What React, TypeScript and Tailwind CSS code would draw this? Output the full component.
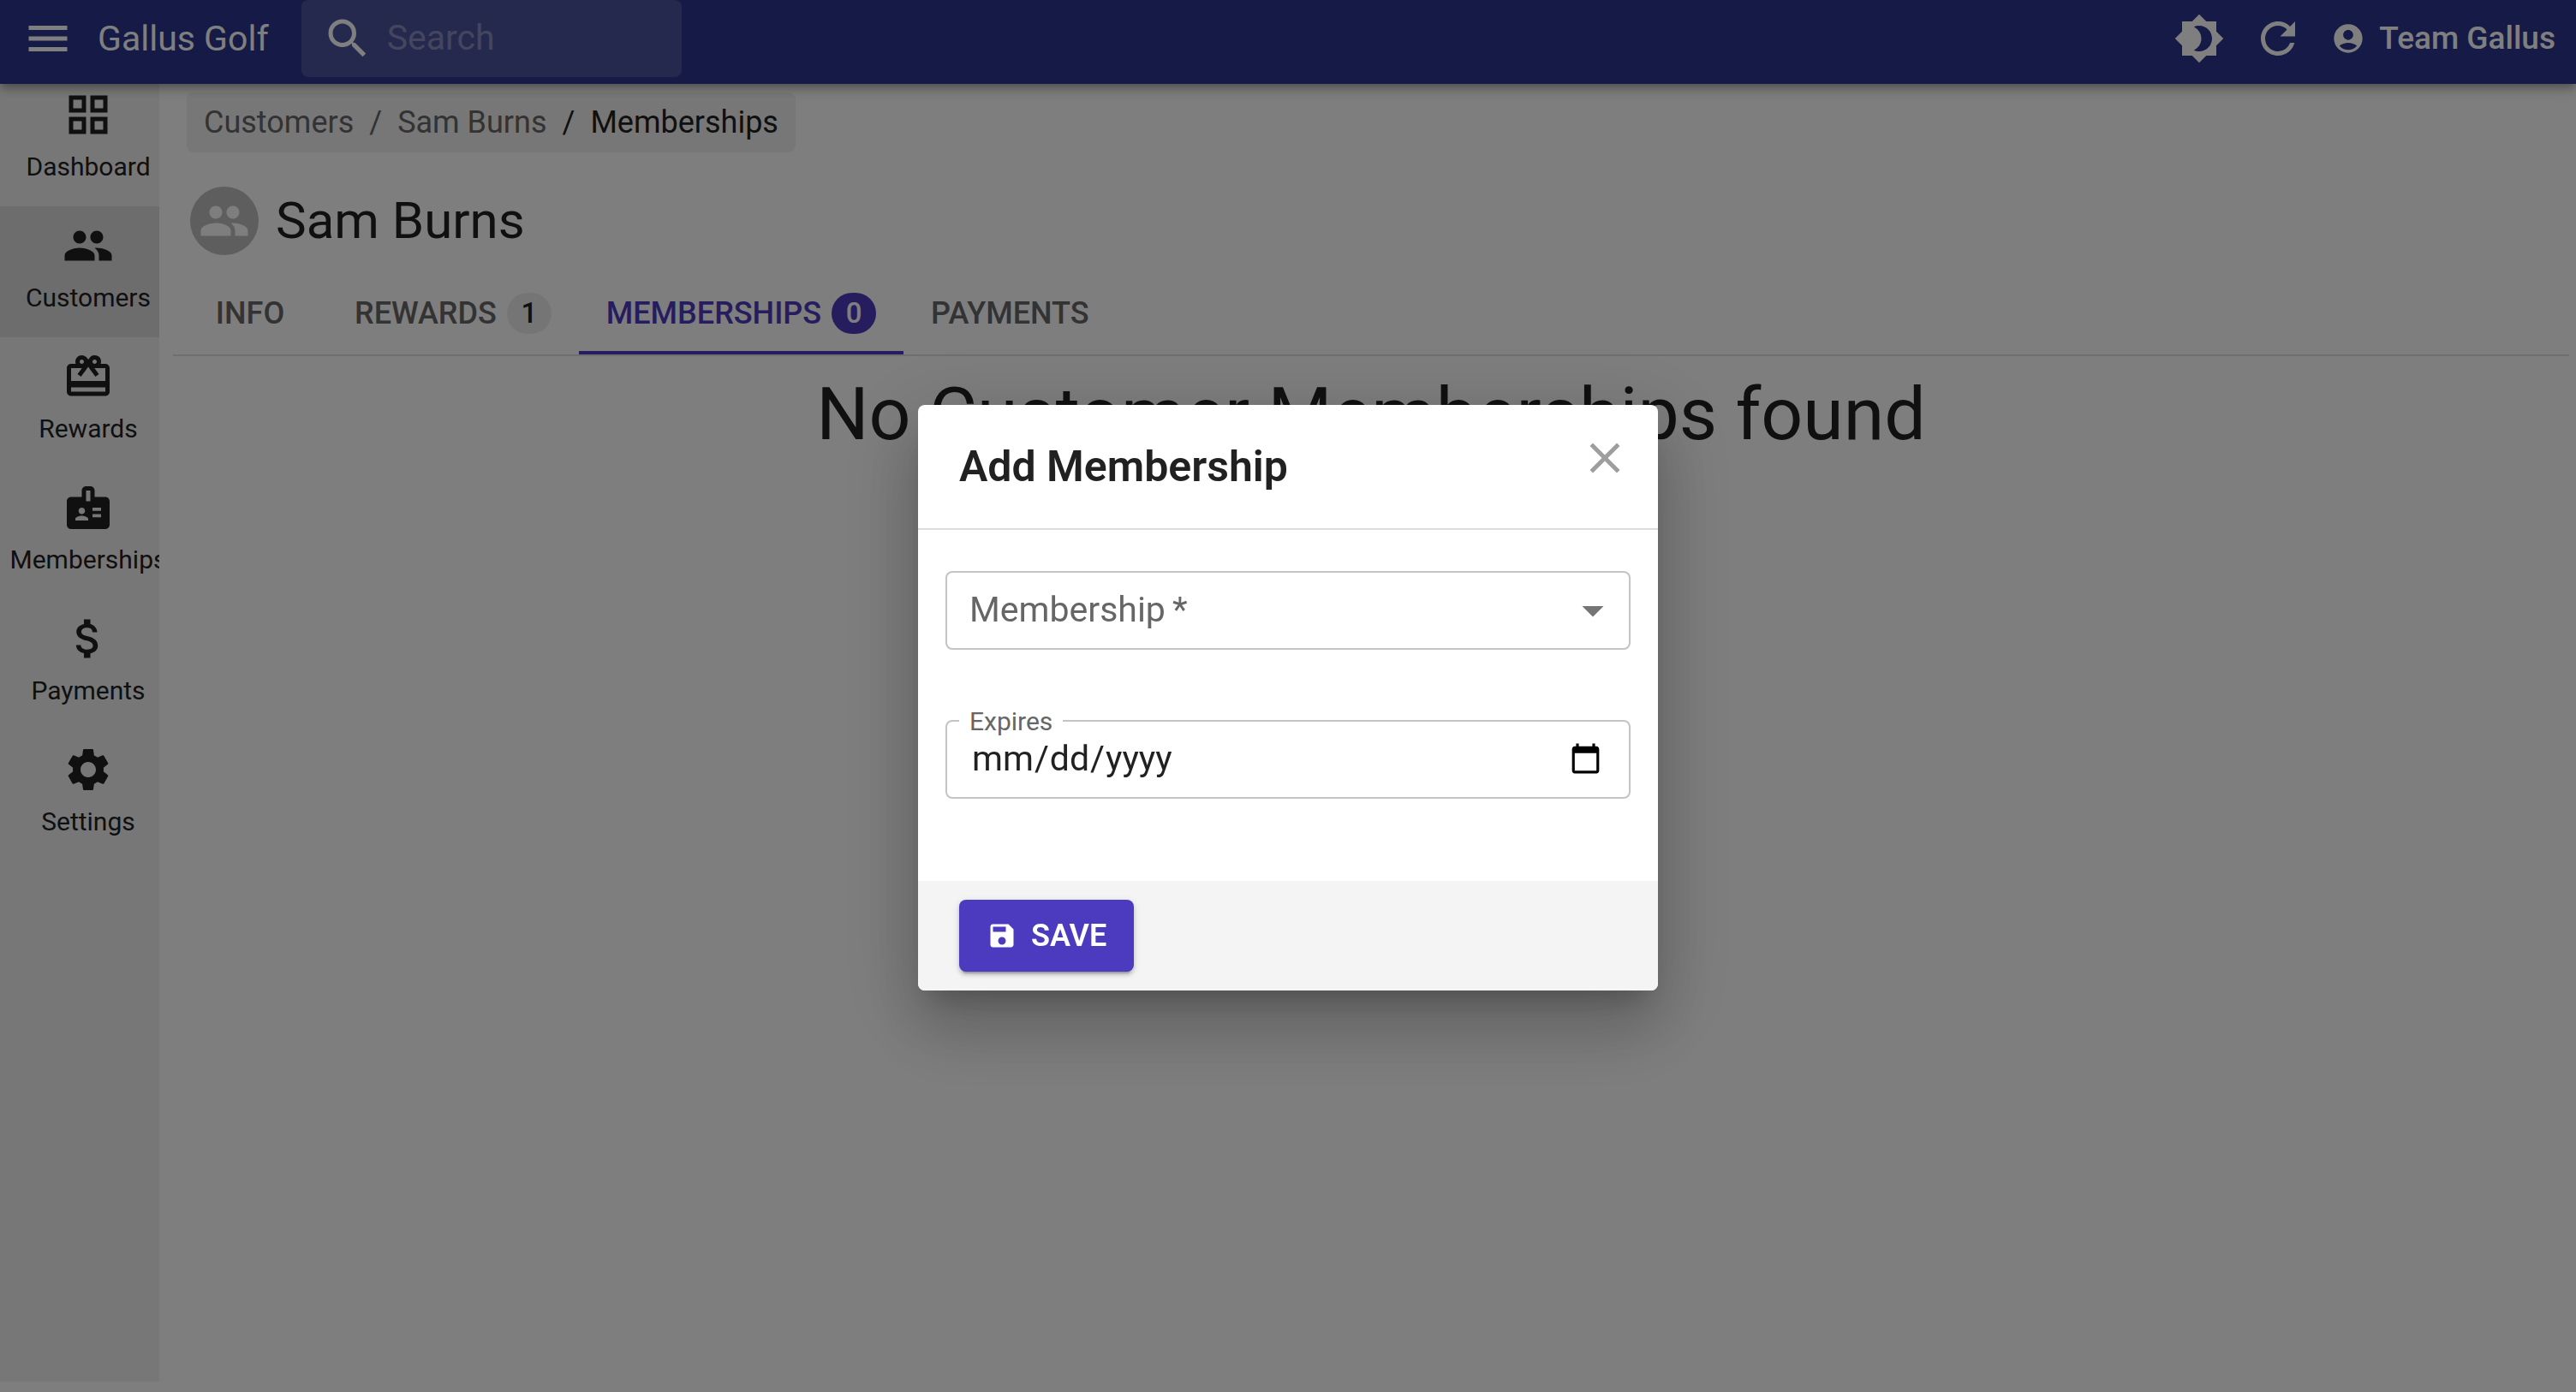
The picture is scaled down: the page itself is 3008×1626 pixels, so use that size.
import type { ReactNode } from "react";
import {
  MdArrowDropDown,
  MdAttachMoney,
  MdBadge,
  MdBrightness4,
  MdCardGiftcard,
  MdClose,
  MdMenu,
  MdPeople,
  MdRefresh,
  MdSave,
  MdSearch,
  MdSettings,
} from "react-icons/md";

function GridIcon() {
  return (
    <svg viewBox="0 0 24 24" fill="currentColor" className="size-15" aria-hidden="true">
      <path d="M3 3v8h8V3H3zm6 6H5V5h4v4zm-6 4v8h8v-8H3zm6 6H5v-4h4v4zm4-16v8h8V3h-8zm6 6h-4V5h4v4zm-6 4v8h8v-8h-8zm6 6h-4v-4h4v4z" />
    </svg>
  );
}

function AccountIcon() {
  return (
    <svg viewBox="0 0 24 24" fill="currentColor" className="size-10" aria-hidden="true">
      <path d="M12 2C6.48 2 2 6.48 2 12s4.48 10 10 10 10-4.48 10-10S17.52 2 12 2zm0 4c1.93 0 3.5 1.57 3.5 3.5S13.93 13 12 13s-3.5-1.57-3.5-3.5S10.07 6 12 6zm0 14c-2.03 0-4.43-.82-6.14-2.88C7.55 15.8 9.68 15 12 15s4.45.8 6.14 2.12C16.43 19.18 14.03 20 12 20z" />
    </svg>
  );
}

const navItems: { label: string; icon: ReactNode }[] = [
  { label: "Dashboard", icon: <GridIcon /> },
  { label: "Customers", icon: <MdPeople className="size-15" /> },
  { label: "Rewards", icon: <MdCardGiftcard className="size-15" /> },
  { label: "Memberships", icon: <MdBadge className="size-15" /> },
  { label: "Payments", icon: <MdAttachMoney className="size-15" /> },
  { label: "Settings", icon: <MdSettings className="size-15" /> },
];

const tabs: { label: string; count?: number }[] = [
  { label: "INFO" },
  { label: "REWARDS", count: 1 },
  { label: "MEMBERSHIPS", count: 0 },
  { label: "PAYMENTS" },
];

function Header() {
  return (
    <header className="relative z-10 flex items-center bg-[#2c348c] pr-6 pb-2 pl-[26px] text-white shadow-[0_4px_8px_-2px_rgba(0,0,0,0.2),0_8px_10px_rgba(0,0,0,0.14),0_2px_20px_rgba(0,0,0,0.12)]">
      <button type="button" aria-label="Menu">
        <MdMenu className="size-15" />
      </button>
      <span className="ml-7 text-[41px] leading-[60px]">Gallus Golf</span>
      <label className="ml-[38px] flex h-[90px] w-[444px] items-center gap-4 rounded-lg bg-white/15 pl-6">
        <MdSearch className="size-15 shrink-0" />
        <input
          type="search"
          aria-label="Search"
          placeholder="Search"
          className="w-full min-w-0 bg-transparent text-[41px] outline-none placeholder:text-white/35"
        />
      </label>
      <div className="ml-auto flex items-center">
        <button type="button" aria-label="Toggle theme">
          <MdBrightness4 className="size-15" />
        </button>
        <button type="button" aria-label="Refresh" className="ml-8">
          <MdRefresh className="size-15" />
        </button>
        <button type="button" className="ml-8 flex items-center gap-4 text-[37px] leading-[60px] font-medium">
          <AccountIcon />
          Team Gallus
        </button>
      </div>
    </header>
  );
}

function Sidebar() {
  return (
    <nav className="mb-3 w-[186px] shrink-0 overflow-hidden bg-[#efefef]">
      {navItems.map((item) => (
        <a
          key={item.label}
          href="#"
          className={
            item.label === "Customers"
              ? "flex w-[206px] flex-col items-center gap-2 bg-[#dadada] pt-4 pb-6"
              : "flex w-[206px] flex-col items-center gap-2 pt-4 pb-6"
          }
        >
          {item.icon}
          <span className="text-[30px] leading-[45px]">{item.label}</span>
        </a>
      ))}
    </nav>
  );
}

function Content() {
  return (
    <main className="min-w-0 flex-1 pt-5 pr-2 pl-4">
      <nav
        aria-label="Breadcrumb"
        className="ml-4 flex h-[70px] w-fit items-center gap-[18px] rounded-lg bg-[#efefef] px-5 text-[36px] text-[#666]"
      >
        <a href="#">Customers</a>
        <span>/</span>
        <a href="#">Sam Burns</a>
        <span className="text-[#212121]">/</span>
        <span className="text-[#212121]">Memberships</span>
      </nav>

      <div className="mt-10 ml-5 flex items-center gap-5">
        <span className="flex size-20 items-center justify-center rounded-full bg-[#bdbdbd] text-[#fcfcfc]">
          <MdPeople className="size-15" />
        </span>
        <h1 className="text-[60px] leading-20">Sam Burns</h1>
      </div>

      <div role="tablist" className="mt-5 flex border-b-2 border-[#dedede] text-[36px] font-medium">
        {tabs.map((tab) => {
          const active = tab.label === "MEMBERSHIPS";
          return (
            <button
              key={tab.label}
              type="button"
              role="tab"
              aria-selected={active}
              className={
                active
                  ? "flex h-24 items-center justify-center gap-3 border-b-4 border-[#4c3bbf] px-8 pt-1 text-[#4c3bbf]"
                  : "flex h-24 min-w-[180px] items-center justify-center gap-3 border-b-4 border-transparent px-8 pt-1 text-[#666]"
              }
            >
              {tab.label}
              {tab.count !== undefined && (
                <span
                  className={
                    active
                      ? "flex h-12 w-[52px] items-center justify-center rounded-full bg-[#4c3bbf] text-[33px] text-white"
                      : "flex h-12 w-[52px] items-center justify-center rounded-full bg-[#ebebeb] text-[33px] text-[#212121]"
                  }
                >
                  {tab.count}
                </span>
              )}
            </button>
          );
        })}
      </div>

      <h2 className="mt-4 text-center text-[86px] leading-[104px]">No Customer Memberships found</h2>
    </main>
  );
}

function AddMembershipDialog() {
  return (
    <div className="fixed inset-0 z-20 flex items-center justify-center bg-black/50 pt-1">
      <form
        role="dialog"
        aria-labelledby="dialog-title"
        className="w-[864px] overflow-hidden rounded-lg bg-white shadow-[0_22px_30px_-14px_rgba(0,0,0,0.2),0_48px_76px_6px_rgba(0,0,0,0.14),0_18px_92px_16px_rgba(0,0,0,0.12)]"
      >
        <div className="flex items-start justify-between border-b-2 border-[#ddd] pt-8 pr-8 pb-9 pl-12">
          <h2 id="dialog-title" className="pt-1 text-[50px] leading-[72px] font-semibold">
            Add Membership
          </h2>
          <button type="button" aria-label="Close" className="text-[#9e9e9e]">
            <MdClose className="size-15" />
          </button>
        </div>

        <div className="flex flex-col gap-[82px] px-8 pt-12 pb-24">
          <div className="relative">
            <select
              id="membership"
              required
              defaultValue=""
              className="block h-[92px] w-full appearance-none rounded-lg border-2 border-[#c4c4c4] bg-transparent px-7 text-[41px] outline-none"
            >
              <option value="" />
            </select>
            <label
              htmlFor="membership"
              className="pointer-events-none absolute inset-y-0 left-7 flex items-center gap-2 text-[41px] text-[#666]"
            >
              Membership <span>*</span>
            </label>
            <MdArrowDropDown className="pointer-events-none absolute inset-y-4 right-3.5 size-15 text-[#757575]" />
          </div>

          <div className="relative">
            <input
              id="expires"
              type="date"
              className="block h-[92px] w-full rounded-lg border-2 border-[#c4c4c4] bg-transparent px-7 text-[41px] text-[#212121] outline-none"
            />
            <label
              htmlFor="expires"
              className="absolute -top-[18px] left-4 bg-white px-3 text-[30px] leading-10 text-[#666]"
            >
              Expires
            </label>
          </div>
        </div>

        <div className="bg-[#f4f4f4] px-12 py-[22px]">
          <button
            type="submit"
            className="flex h-[84px] items-center gap-4 rounded-lg bg-[#4c3bbf] px-8 text-[36px] font-semibold text-white shadow-[0_6px_2px_-4px_rgba(0,0,0,0.2),0_4px_4px_rgba(0,0,0,0.14),0_2px_10px_rgba(0,0,0,0.12)]"
          >
            <MdSave className="size-9" />
            SAVE
          </button>
        </div>
      </form>
    </div>
  );
}

export default function App() {
  return (
    <div className="flex min-h-screen flex-col bg-[#fcfcfc] font-['Roboto',sans-serif] text-[#212121]">
      <Header />
      <div className="-mt-2.5 flex flex-1">
        <Sidebar />
        <Content />
      </div>
      <AddMembershipDialog />
    </div>
  );
}
